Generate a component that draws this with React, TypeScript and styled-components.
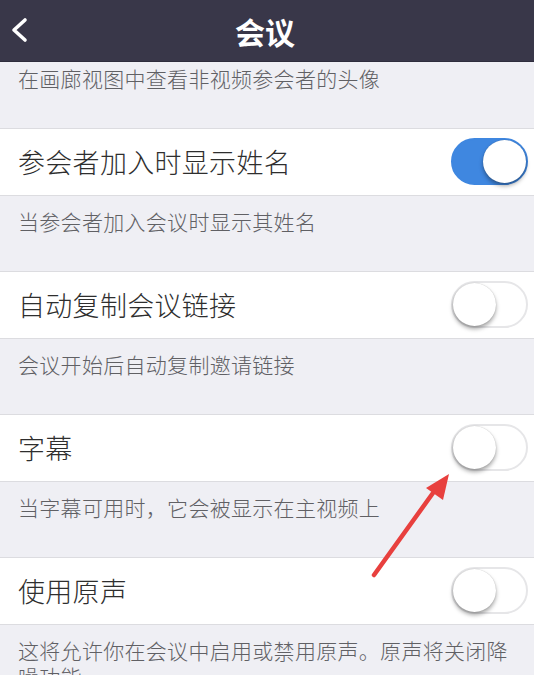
import React from "react";
import styled, { createGlobalStyle } from "styled-components";

const GlobalStyle = createGlobalStyle`
  html, body {
    margin: 0;
    padding: 0;
    background: #efeff4;
    overflow: hidden;
  }
  body {
    font-family: "Noto Sans CJK SC", "Noto Sans", sans-serif;
  }
`;

const Page = styled.div`
  position: relative;
  width: 534px;
  height: 675px;
  background: #efeff4;
  overflow: hidden;
`;

const Header = styled.div`
  height: 62px;
  background: #393749;
  display: flex;
  align-items: center;
  justify-content: center;
  position: relative;
  border-bottom: 1px solid #2e2c3c;
  box-sizing: border-box;
`;

const Title = styled.h1`
  margin: 0 0 0 -4px;
  color: #ffffff;
  font-size: 30px;
  font-weight: 700;
`;

const BackButton = styled.button`
  position: absolute;
  left: 6px;
  top: 14px;
  width: 28px;
  height: 32px;
  padding: 0;
  border: none;
  background: transparent;
  display: flex;
  align-items: center;
  justify-content: center;
`;

const Desc = styled.p<{ $top?: number }>`
  margin: 0;
  padding: ${(p) => p.$top ?? 12}px 18px 37px 18px;
  font-size: 21px;
  line-height: 26px;
  font-weight: 300;
  letter-spacing: 0.3px;
  color: #606064;
`;

const Row = styled.div`
  height: 68px;
  box-sizing: border-box;
  background: #ffffff;
  border-top: 1px solid #dcdce0;
  border-bottom: 1px solid #dcdce0;
  display: flex;
  align-items: center;
  justify-content: space-between;
  padding: 0 6px 2px 18px;
`;

const Label = styled.span`
  font-size: 27px;
  font-weight: 300;
  color: #2e2e2e;
  letter-spacing: 0.3px;
`;

const Track = styled.div<{ $on: boolean }>`
  position: relative;
  width: 77px;
  height: 47px;
  box-sizing: border-box;
  border-radius: 24px;
  background: ${(p) => (p.$on ? "#3f87e0" : "#ffffff")};
  border: 2px solid ${(p) => (p.$on ? "#3f87e0" : "#e6e6e8")};
`;

const Knob = styled.div<{ $on: boolean }>`
  position: absolute;
  top: 0;
  ${(p) => (p.$on ? "right: 0;" : "left: 0;")}
  width: 43px;
  height: 43px;
  border-radius: 50%;
  background: #ffffff;
  box-shadow: 0 3px 4px rgba(0, 0, 0, 0.35), 0 0 1px rgba(0, 0, 0, 0.25);
`;

const Arrow = styled.svg`
  position: absolute;
  left: 360px;
  top: 462px;
  pointer-events: none;
`;

const Toggle = ({ on }: { on: boolean }) => (
  <Track $on={on}>
    <Knob $on={on} />
  </Track>
);

const settings = [
  { label: "参会者加入时显示姓名", desc: "当参会者加入会议时显示其姓名", on: true },
  { label: "自动复制会议链接", desc: "会议开始后自动复制邀请链接", on: false },
  { label: "字幕", desc: "当字幕可用时，它会被显示在主视频上", on: false },
  {
    label: "使用原声",
    desc: "这将允许你在会议中启用或禁用原声。原声将关闭降噪功能",
    on: false,
  },
];

export default function App() {
  return (
    <Page>
      <GlobalStyle />
      <Header>
        <BackButton aria-label="返回">
          <svg width="20" height="26" viewBox="0 0 20 26">
            <path
              d="M15 3 L4 13 L15 23"
              fill="none"
              stroke="#ffffff"
              strokeWidth="3.6"
              strokeLinecap="round"
              strokeLinejoin="round"
            />
          </svg>
        </BackButton>
        <Title>会议</Title>
      </Header>
      <Desc $top={3}>在画廊视图中查看非视频参会者的头像</Desc>
      {settings.map((s) => (
        <React.Fragment key={s.label}>
          <Row>
            <Label>{s.label}</Label>
            <Toggle on={s.on} />
          </Row>
          <Desc>{s.desc}</Desc>
        </React.Fragment>
      ))}
      <Arrow width="100" height="126" viewBox="0 0 100 126">
        <line
          x1="14"
          y1="113"
          x2="78"
          y2="24"
          stroke="#e8403e"
          strokeWidth="4.5"
          strokeLinecap="round"
        />
        <polygon points="89,12 83,38 66,26" fill="#e8403e" />
      </Arrow>
    </Page>
  );
}
